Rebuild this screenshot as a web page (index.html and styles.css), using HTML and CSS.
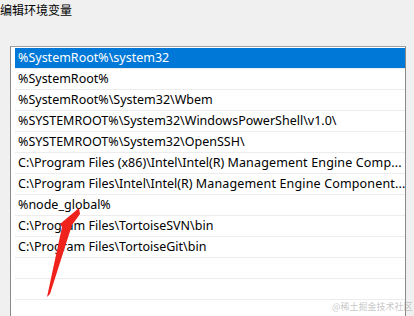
FILE: index.html
```html
<!DOCTYPE html>
<html lang="zh">
<head>
<meta charset="utf-8">
<link rel="stylesheet" href="styles.css">
</head>
<body>
<div class="title">编辑环境变量</div>
<div class="listbox">
  <div class="row selected">%SystemRoot%\system32</div>
  <div class="row">%SystemRoot%</div>
  <div class="row">%SystemRoot%\System32\Wbem</div>
  <div class="row">%SYSTEMROOT%\System32\WindowsPowerShell\v1.0\</div>
  <div class="row">%SYSTEMROOT%\System32\OpenSSH\</div>
  <div class="row">C:\Program Files (x86)\Intel\Intel(R) <span class="wide">Management Engine Comp...</span></div>
  <div class="row">C:\Program Files\Intel\Intel(R) <span class="wide">Management Engine Component...</span></div>
  <div class="row">%node_global%</div>
  <div class="row">C:\Program Files\TortoiseSVN\bin</div>
  <div class="row">C:\Program Files\TortoiseGit\bin</div>
  <div class="row"></div>
  <div class="row"></div>
  <div class="row"></div>
</div>
<svg class="arrow" width="414" height="316" viewBox="0 0 414 316">
  <polygon points="79,208 80,214 72,225 50,294 47,297 62,227 60,224" fill="#f0231c"/>
</svg>
<div class="watermark">@稀土掘金技术社区</div>
</body>
</html>
```
FILE: styles.css
```css
html, body {
  margin: 0;
  padding: 0;
}
body {
  width: 414px;
  height: 316px;
  overflow: hidden;
  background: #f0f0f0;
  font-family: "Noto Sans", "Noto Sans CJK SC", sans-serif;
  color: #000;
  position: relative;
}
.title {
  font-family: "Noto Sans CJK SC", sans-serif;
  font-size: 12px;
  line-height: 16px;
  padding-top: 2px;
  height: 28px;
}
.listbox {
  margin-top: 16px;
  margin-left: 10px;
  width: 390px;
  height: 269px;
  background: #fff;
  border: 1px solid #8a8a8a;
  border-top-color: #a0a0a0;
  border-bottom: none;
  padding: 1px 0 0 4px;
  box-sizing: content-box;
  overflow: hidden;
}
.row {
  height: 20px;
  line-height: 20px;
  border-bottom: 1px solid #ececec;
  padding-left: 3px;
  font-size: 12.5px;
  white-space: nowrap;
  overflow: hidden;
}
.wide {
  letter-spacing: 0.15px;
}
.row.selected {
  background: #0078d7;
  color: #fff;
}
.arrow {
  position: absolute;
  left: 0;
  top: 0;
}
.watermark {
  position: absolute;
  left: 332px;
  top: 301px;
  font-family: "Noto Sans CJK SC", sans-serif;
  font-size: 9px;
  line-height: 12px;
  color: rgba(150, 150, 150, 0.55);
  white-space: nowrap;
}
```
